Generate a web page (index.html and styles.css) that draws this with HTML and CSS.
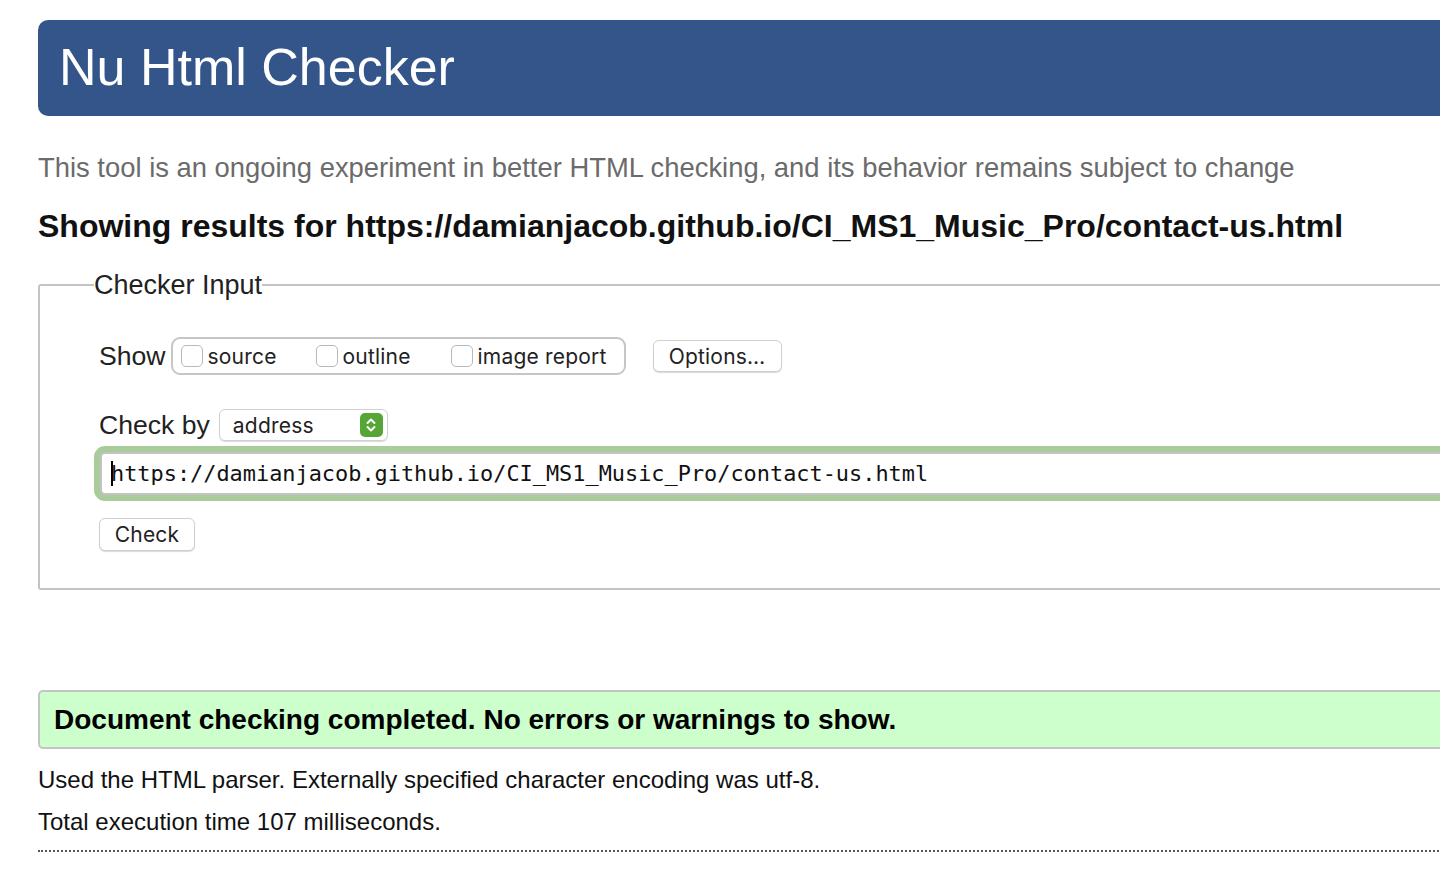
FILE: index.html
```html
<!DOCTYPE html>
<html lang="en">
<head>
<meta charset="utf-8">
<title>Showing results for contact-us.html - Nu Html Checker</title>
<link rel="stylesheet" href="styles.css">
</head>
<body>
<header class="masthead"><h1 class="title">Nu Html Checker</h1></header>
<p class="tagline">This tool is an ongoing experiment in better HTML checking, and its behavior remains subject to change</p>
<h2 class="results-for">Showing results for https://damianjacob.github.io/CI_MS1_Music_Pro/contact-us.html</h2>
<form class="checker-form">
  <fieldset class="checker-fieldset">
    <legend class="legend">Checker Input</legend>
    <div class="row show-row">
      <span class="label">Show</span>
      <div class="show-group">
        <label class="opt"><span class="cb"></span>source</label>
        <label class="opt"><span class="cb"></span>outline</label>
        <label class="opt"><span class="cb"></span>image report</label>
      </div>
      <span class="btn options-btn">Options…</span>
    </div>
    <div class="row checkby-row">
      <span class="label">Check by</span>
      <div class="select">
        <span class="select-text">address</span>
        <span class="stepper">
          <svg width="14" height="18" viewBox="0 0 14 18"><path d="M3.5 7 L7 3.5 L10.5 7" fill="none" stroke="#fff" stroke-width="2" stroke-linecap="round" stroke-linejoin="round"/><path d="M3.5 11 L7 14.5 L10.5 11" fill="none" stroke="#fff" stroke-width="2" stroke-linecap="round" stroke-linejoin="round"/></svg>
        </span>
      </div>
    </div>
    <div class="url-ring">
      <div class="url-input"><span class="caret"></span>https://damianjacob.github.io/CI_MS1_Music_Pro/contact-us.html</div>
    </div>
    <div class="row check-row">
      <span class="btn check-btn">Check</span>
    </div>
  </fieldset>
</form>
<div class="success">Document checking completed. No errors or warnings to show.</div>
<p class="details">Used the HTML parser. Externally specified character encoding was utf-8.</p>
<p class="details">Total execution time 107 milliseconds.</p>
<hr class="dotted">
</body>
</html>
```
FILE: styles.css
```css
html {
  overflow: hidden;
  background: #fff;
}
body {
  margin: 0;
  padding: 20px 0 0 38px;
  width: 1700px;
  font-family: "Liberation Sans", Arial, sans-serif;
  color: #000;
}
.masthead {
  background: #34558a;
  border-radius: 10px;
  height: 96px;
  display: flex;
  align-items: center;
  padding-left: 21px;
}
.title {
  margin: 0;
  color: #fff;
  font-size: 52px;
  font-weight: normal;
  line-height: 1;
  padding-bottom: 2px;
}
.tagline {
  margin: 37px 0 0 0;
  color: #6b6b6b;
  font-size: 27.4px;
  line-height: 30px;
}
.results-for {
  margin: 25px 0 0 0;
  font-size: 32px;
  line-height: 36px;
  color: #111;
}
.checker-form {
  margin-top: 26px;
}
.checker-fieldset {
  margin: 0;
  border: 2px solid #c4c4c4;
  border-radius: 3px;
  padding: 36px 0 37px 59px;
  font-family: "Liberation Sans", Arial, sans-serif;
}
.legend {
  font-size: 27px;
  color: #222;
  padding: 0;
  margin-left: -5px;
  line-height: 30px;
}
.row {
  display: flex;
  align-items: center;
}
.label {
  font-size: 26.6px;
  color: #222;
}
.show-row {
  height: 40px;
}
.show-group {
  display: flex;
  align-items: center;
  margin-left: 5px;
  height: 38px;
  width: 455px;
  border: 2px solid #c6c6c6;
  border-radius: 9px;
  box-sizing: border-box;
  padding-left: 8px;
}
.opt {
  display: flex;
  align-items: center;
  font-family: Inter, "Liberation Sans", sans-serif;
  font-size: 21px;
  color: #222;
  letter-spacing: 0.2px;
}
.opt:nth-child(1) { width: 135px; }
.opt:nth-child(2) { width: 135px; }
.cb {
  width: 22px;
  height: 22px;
  border: 1px solid #b9b9b9;
  border-radius: 5px;
  box-sizing: border-box;
  margin-right: 5px;
  background: #fff;
}
.btn {
  display: inline-flex;
  align-items: center;
  justify-content: center;
  box-sizing: border-box;
  border: 1px solid #cfcfcf;
  border-radius: 6px;
  background: #fff;
  box-shadow: 0 1px 1px rgba(0,0,0,0.15);
  font-family: Inter, "Liberation Sans", sans-serif;
  font-size: 21px;
  color: #222;
  letter-spacing: 0.2px;
}
.options-btn {
  margin-left: 27px;
  width: 129px;
  height: 32px;
}
.checkby-row {
  margin-top: 29px;
  height: 40px;
}
.select {
  margin-left: 9px;
  width: 169px;
  height: 32px;
  box-sizing: border-box;
  border: 1px solid #d0d0d0;
  border-radius: 6px;
  box-shadow: 0 1px 1px rgba(0,0,0,0.15);
  display: flex;
  align-items: center;
  justify-content: space-between;
  padding: 0 4px 0 13px;
}
.select-text {
  font-family: Inter, "Liberation Sans", sans-serif;
  font-size: 21px;
  color: #222;
  letter-spacing: 0.2px;
}
.stepper {
  width: 23px;
  height: 24px;
  border-radius: 5px;
  background: #55a635;
  display: flex;
  align-items: center;
  justify-content: center;
}
.url-ring {
  margin-left: -5px;
  margin-top: 1px;
  border: 6px solid #aacc9a;
  border-radius: 11px;
  background: #aacc9a;
}
.url-input {
  background: #fff;
  border: 2px solid #c3c3c3;
  border-radius: 5px;
  height: 43px;
  box-sizing: border-box;
  display: flex;
  align-items: center;
  padding-left: 9px;
  font-family: "DejaVu Sans Mono", "Liberation Mono", monospace;
  font-size: 21.9px;
  color: #111;
  white-space: nowrap;
}
.caret {
  width: 2px;
  height: 25px;
  background: #000;
  margin-right: -2px;
}
.check-row {
  margin-top: 17px;
}
.check-btn {
  width: 96px;
  height: 33px;
}
.success {
  margin-top: 100px;
  background: #ccffcc;
  border: 2px solid #c4c4c4;
  border-radius: 5px;
  height: 59px;
  box-sizing: border-box;
  display: flex;
  align-items: center;
  padding-left: 14px;
  font-weight: bold;
  font-size: 28px;
  color: #000;
}
.details {
  margin: 17px 0 0 0;
  font-size: 24px;
  line-height: 28px;
  color: #111;
}
.details + .details {
  margin-top: 14px;
}
.dotted {
  margin: 14px 0 0 0;
  border: 0;
  border-top: 2px dotted #555;
  height: 0;
}
```
